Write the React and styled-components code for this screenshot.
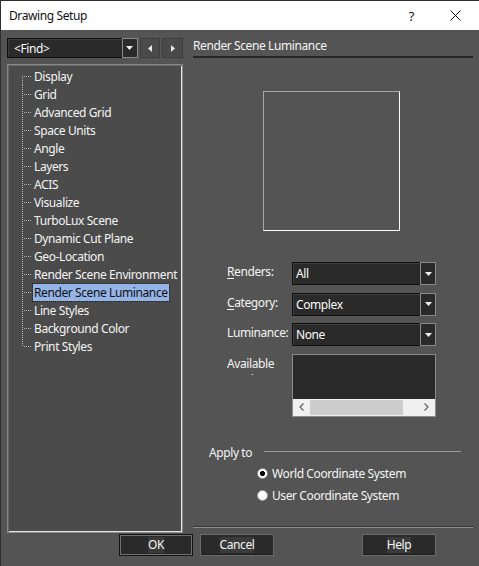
import styled, { createGlobalStyle } from "styled-components";

const treeItems = [
  "Display",
  "Grid",
  "Advanced Grid",
  "Space Units",
  "Angle",
  "Layers",
  "ACIS",
  "Visualize",
  "TurboLux Scene",
  "Dynamic Cut Plane",
  "Geo-Location",
  "Render Scene Environment",
  "Render Scene Luminance",
  "Line Styles",
  "Background Color",
  "Print Styles",
];

const selected = "Render Scene Luminance";

function DownArrow() {
  return (
    <svg width="7" height="4" viewBox="0 0 7 4">
      <path d="M0 0h7L3.5 4z" fill="#f0f0f0" />
    </svg>
  );
}

function Combo({ value, width, inset = 3 }) {
  return (
    <ComboBox $width={width}>
      <ComboField $inset={inset}>{value}</ComboField>
      <DropButton>
        <DownArrow />
      </DropButton>
    </ComboBox>
  );
}

export default function App() {
  return (
    <>
      <GlobalStyle />
      <Dialog>
        <TitleBar>
          <Title>Drawing Setup</Title>
          <TitleButtons>
            <HelpGlyph>?</HelpGlyph>
            <svg width="11" height="11" viewBox="0 0 11 11">
              <path d="M0.5 0.5l10 10M10.5 0.5l-10 10" stroke="#111" strokeWidth="1" />
            </svg>
          </TitleButtons>
        </TitleBar>

        <Body>
          <Main>
            <LeftColumn>
              <FindRow>
                <Combo value="<Find>" width={133} inset={6} />
                <NavButton>
                  <svg width="4" height="7" viewBox="0 0 4 7">
                    <path d="M4 0v7L0 3.5z" fill="#e6e6e6" />
                  </svg>
                </NavButton>
                <NavButton>
                  <svg width="4" height="7" viewBox="0 0 4 7">
                    <path d="M0 0v7l4-3.5z" fill="#e6e6e6" />
                  </svg>
                </NavButton>
              </FindRow>

              <Tree>
                {treeItems.map((item, i) => (
                  <TreeRow key={item}>
                    <Connector $first={i === 0} $last={i === treeItems.length - 1} />
                    <TreeLabel $selected={item === selected}>{item}</TreeLabel>
                  </TreeRow>
                ))}
              </Tree>
            </LeftColumn>

            <RightColumn>
              <PageHeader>Render Scene Luminance</PageHeader>
              <Preview />

              <Form>
                <FormRow>
                  <FieldLabel>
                    <u>R</u>enders:
                  </FieldLabel>
                  <Combo value="All" width={144} />
                </FormRow>
                <FormRow>
                  <FieldLabel>
                    <u>C</u>ategory:
                  </FieldLabel>
                  <Combo value="Complex" width={144} />
                </FormRow>
                <FormRow>
                  <FieldLabel>Luminance:</FieldLabel>
                  <Combo value="None" width={144} />
                </FormRow>
                <FormRow>
                  <ClippedLabel>Available Luminances</ClippedLabel>
                  <ListBox>
                    <ListArea />
                    <HScroll>
                      <ScrollArrow>
                        <svg width="5" height="8" viewBox="0 0 5 8">
                          <path d="M4.5 0.5L1 4l3.5 3.5" stroke="#606060" strokeWidth="1.2" fill="none" />
                        </svg>
                      </ScrollArrow>
                      <Track>
                        <Thumb />
                      </Track>
                      <ScrollArrow>
                        <svg width="5" height="8" viewBox="0 0 5 8">
                          <path d="M0.5 0.5L4 4L0.5 7.5" stroke="#606060" strokeWidth="1.2" fill="none" />
                        </svg>
                      </ScrollArrow>
                    </HScroll>
                  </ListBox>
                </FormRow>
              </Form>

              <GroupHead>
                <GroupTitle>Apply to</GroupTitle>
                <GroupLine />
              </GroupHead>
              <RadioList>
                <RadioRow>
                  <Radio $checked />
                  World Coordinate System
                </RadioRow>
                <RadioRow>
                  <Radio />
                  User Coordinate System
                </RadioRow>
              </RadioList>

              <Separator />
            </RightColumn>
          </Main>

          <ButtonRow>
            <Button $default>
              <Caption>OK</Caption>
            </Button>
            <Button>
              <Caption>Cancel</Caption>
            </Button>
            <Spacer />
            <Button>
              <Caption>Help</Caption>
            </Button>
          </ButtonRow>
        </Body>
      </Dialog>
    </>
  );
}

const GlobalStyle = createGlobalStyle`
  html, body {
    margin: 0;
    padding: 0;
    background: #3c3c3c;
  }
  body {
    font-family: "Noto Sans", "Open Sans", sans-serif;
    font-size: 12px;
    letter-spacing: -0.4px;
  }
`;

const Dialog = styled.div`
  width: 479px;
  height: 566px;
  box-sizing: border-box;
  border-left: 1px solid #2e2e2e;
  border-top: 1px solid #2e2e2e;
  display: flex;
  flex-direction: column;
  background: #545454;
  overflow: hidden;
`;

const TitleBar = styled.div`
  height: 29px;
  background: #ffffff;
  display: flex;
  align-items: center;
  justify-content: space-between;
  padding: 0 18px 0 8px;
  flex-shrink: 0;
`;

const Title = styled.span`
  color: #111;
  font-size: 12px;
`;

const TitleButtons = styled.div`
  display: flex;
  align-items: center;
  gap: 36px;
`;

const HelpGlyph = styled.span`
  color: #111;
  font-size: 13px;
`;

const Body = styled.div`
  flex: 1;
  display: flex;
  flex-direction: column;
  color: #f4f4f4;
`;

const Main = styled.div`
  display: flex;
  padding: 8px 0 0 6px;
  gap: 10px;
  height: 495px;
`;

const LeftColumn = styled.div`
  width: 176px;
  display: flex;
  flex-direction: column;
  gap: 6px;
`;

const FindRow = styled.div`
  display: flex;
  align-items: center;
  gap: 1px;
  height: 20px;
`;

const ComboBox = styled.div`
  width: ${(p) => p.$width}px;
  height: 100%;
  display: flex;
  box-sizing: border-box;
`;

const ComboField = styled.div`
  flex: 1;
  background: #2a2a2a;
  border: 1px solid #0f0f0f;
  border-right: none;
  box-shadow: inset 1px 1px 0 #3e3e3e;
  display: flex;
  align-items: center;
  padding-left: ${(p) => p.$inset}px;
  color: #fafafa;
  white-space: nowrap;
`;

const DropButton = styled.div`
  width: 14px;
  background: #2a2a2a;
  border: 1px solid #8a8a8a;
  display: flex;
  align-items: center;
  justify-content: center;
`;

const NavButton = styled.div`
  width: 19px;
  height: 18px;
  margin-left: 1px;
  background: #4a4a4a;
  border: 1px solid #3d3d3d;
  display: flex;
  align-items: center;
  justify-content: center;
`;

const Tree = styled.div`
  height: 469px;
  box-sizing: border-box;
  background: #4b4b4b;
  border: 1px solid #8a8a8a;
  box-shadow: inset 1px 1px 0 #666, inset -1px -1px 0 #e6e6e6;
  padding: 2px 0 0 14px;
`;

const TreeRow = styled.div`
  display: flex;
  align-items: center;
  height: 18px;
`;

const Connector = styled.div`
  position: relative;
  width: 11px;
  height: 100%;
  flex-shrink: 0;

  &::before {
    content: "";
    position: absolute;
    left: 0;
    width: 1px;
    top: ${(p) => (p.$first ? "9px" : "0")};
    bottom: ${(p) => (p.$last ? "9px" : "0")};
    background: repeating-linear-gradient(to bottom, #b4b4b4 0 1px, transparent 1px 2px);
  }

  &::after {
    content: "";
    position: absolute;
    left: 1px;
    top: 9px;
    width: 9px;
    height: 1px;
    background: repeating-linear-gradient(to right, transparent 0 1px, #b4b4b4 1px 2px);
  }
`;

const TreeLabel = styled.span`
  padding: 0 1px;
  height: 17px;
  line-height: 17px;
  white-space: nowrap;
  color: ${(p) => (p.$selected ? "#111" : "#f4f4f4")};
  background: ${(p) => (p.$selected ? "#94b3e6" : "transparent")};
  outline: ${(p) => (p.$selected ? "1px dotted #222" : "none")};
`;

const RightColumn = styled.div`
  width: 280px;
  display: flex;
  flex-direction: column;
`;

const PageHeader = styled.div`
  height: 18px;
  line-height: 16px;
  border-bottom: 2px solid #262626;
  color: #f4f4f4;
  font-size: 12px;
`;

const Preview = styled.div`
  width: 135px;
  height: 138px;
  margin: 33px 0 0 70px;
  border: 1px solid #a8a8a8;
  border-right-color: #fafafa;
  border-bottom-color: #fafafa;
`;

const Form = styled.div`
  margin-top: 31px;
  display: flex;
  flex-direction: column;
  gap: 7.5px;
  padding-left: 34px;
`;

const FormRow = styled.div`
  display: flex;
  height: 23px;
  align-items: flex-start;

  &:last-child {
    height: auto;
  }
`;

const FieldLabel = styled.div`
  width: 65px;
  line-height: 20px;
  white-space: nowrap;

  u {
    text-decoration-thickness: 1px;
    text-underline-offset: 2px;
  }
`;

const ClippedLabel = styled(FieldLabel)`
  width: 65px;
  white-space: normal;
  line-height: 16px;
  height: 19px;
  margin-top: 2px;
  overflow: hidden;
`;

const ListBox = styled.div`
  width: 144px;
  height: 63px;
  box-sizing: border-box;
  border: 1px solid #8a8a8a;
  background: #2a2a2a;
  display: flex;
  flex-direction: column;
`;

const ListArea = styled.div`
  flex: 1;
`;

const HScroll = styled.div`
  height: 17px;
  background: #f0f0f0;
  display: flex;
  align-items: center;
`;

const ScrollArrow = styled.div`
  width: 17px;
  height: 100%;
  display: flex;
  align-items: center;
  justify-content: center;
`;

const Track = styled.div`
  flex: 1;
  height: 100%;
  display: flex;
  align-items: center;
`;

const Thumb = styled.div`
  width: 93px;
  height: 15px;
  background: #cdcdcd;
`;

const GroupHead = styled.div`
  display: flex;
  align-items: center;
  margin-top: 28px;
  padding-left: 16px;
  gap: 12px;
`;

const GroupTitle = styled.span`
  line-height: 16px;
`;

const GroupLine = styled.div`
  width: 197px;
  height: 0;
  border-top: 1px solid #9a9a9a;
  margin-top: -2px;
`;

const RadioList = styled.div`
  display: flex;
  flex-direction: column;
  gap: 5px;
  padding-left: 64px;
  margin-top: 4px;
`;

const RadioRow = styled.div`
  display: flex;
  align-items: center;
  gap: 4px;
  height: 17px;
`;

const Radio = styled.span`
  width: 11px;
  height: 11px;
  box-sizing: border-box;
  border-radius: 50%;
  background: ${(p) =>
    p.$checked ? "radial-gradient(circle, #000 0 2.2px, #fff 2.8px)" : "#fff"};
  border: 1px solid #9a9a9a;
  flex-shrink: 0;
`;

const Separator = styled.div`
  margin-top: auto;
  margin-bottom: 5px;
  height: 0;
  border-top: 1px solid #3a3a3a;
  border-bottom: 1px solid #8c8c8c;
`;

const ButtonRow = styled.div`
  display: flex;
  padding: 1px 0 0 118px;
  gap: 7px;
`;

const Spacer = styled.div`
  width: 74px;
`;

const Button = styled.div`
  width: 74px;
  height: 22px;
  box-sizing: border-box;
  background: #2a2a2a;
  border: 1px solid ${(p) => (p.$default ? "#141414" : "#6c6c6c")};
  box-shadow: ${(p) =>
    p.$default ? "inset 0 0 0 1px #707070" : "inset 0 -1px 0 #1e1e1e"};
  display: flex;
  align-items: center;
  justify-content: center;
`;

const Caption = styled.span`
  background: #3a3a3a;
  color: #f4f4f4;
  line-height: 16px;
`;
